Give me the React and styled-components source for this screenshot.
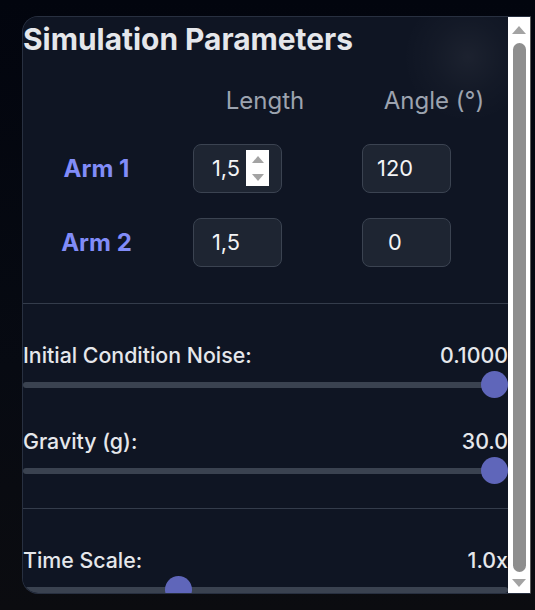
import React from "react";
import styled, { createGlobalStyle } from "styled-components";

const Global = createGlobalStyle`
  html, body {
    margin: 0;
    padding: 0;
  }
  body {
    background: linear-gradient(180deg, #02050e 0%, #070a12 60%, #0b0c10 100%);
    font-family: Inter, "Noto Sans", sans-serif;
  }
`;

const arms = [
  { name: "Arm 1", length: "1,5", angle: "120", spin: true },
  { name: "Arm 2", length: "1,5", angle: "0", spin: false },
];

const App = () => {
  return (
    <>
      <Global />
      <Page>
        <Panel>
          <Content>
            <Title>Simulation Parameters</Title>
            <ArmGrid>
              <span />
              <ColHead>Length</ColHead>
              <ColHead>Angle (°)</ColHead>
              {arms.map((arm) => (
                <React.Fragment key={arm.name}>
                  <ArmLabel>{arm.name}</ArmLabel>
                  <NumBox $offset={23}>
                    <span>{arm.length}</span>
                    <Spinner $show={arm.spin}>
                      <SpinUp />
                      <SpinDown />
                    </Spinner>
                  </NumBox>
                  <NumBox $offset={2}>
                    <span>{arm.angle}</span>
                    <Spinner />
                  </NumBox>
                </React.Fragment>
              ))}
            </ArmGrid>
            <Divider />
            <Section $top={35}>
              <Slider label="Initial Condition Noise:" value="0.1000" frac={1} />
              <Gap />
              <Slider label="Gravity (g):" value="30.0" frac={1} />
            </Section>
            <Divider />
            <Section $top={35}>
              <Slider label="Time Scale:" value="1.0x" frac={0.31} />
            </Section>
          </Content>
          <Scrollbar>
            <ArrowSlot $h={26}>
              <ArrowUp />
            </ArrowSlot>
            <ScrollThumb />
            <ArrowSlot $h={21}>
              <ArrowDown />
            </ArrowSlot>
          </Scrollbar>
        </Panel>
      </Page>
    </>
  );
};

const Slider = ({ label, value, frac }) => (
  <div>
    <SliderHead>
      <span>{label}</span>
      <span>{value}</span>
    </SliderHead>
    <Track>
      <Knob style={{ left: `calc((100% - 27px) * ${frac})` }} />
    </Track>
  </div>
);

const Page = styled.div`
  height: 610px;
  padding: 16px 0 0 22px;
  box-sizing: border-box;
`;

const Panel = styled.div`
  display: flex;
  width: 509px;
  height: 578px;
  box-sizing: border-box;
  border: 1px solid #283040;
  border-right-color: #5a5a5a;
  border-radius: 16px 0 0 16px;
  overflow: hidden;
  background: #0f1523;
`;

const Content = styled.div`
  flex: 1;
  overflow: hidden;
  background: radial-gradient(
      circle at 445px 40px,
      rgba(255, 255, 255, 0.055) 0,
      rgba(255, 255, 255, 0.02) 35px,
      rgba(255, 255, 255, 0) 65px
    ),
    #0f1523;
`;

const Title = styled.h2`
  margin: 5px 0 0;
  font-size: 29.9px;
  line-height: 34px;
  font-weight: 700;
  color: #e5e7eb;
`;

const ArmGrid = styled.div`
  display: grid;
  grid-template-columns: 147px 190px 1fr;
  grid-template-rows: 55px 74px 74px;
  align-items: center;
  margin-top: 20px;
`;

const ColHead = styled.div`
  margin-bottom: 6px;
  text-align: center;
  font-size: 24px;
  line-height: 36px;
  font-weight: 400;
  color: #9ca3af;
`;

const ArmLabel = styled.div`
  text-align: center;
  font-size: 24px;
  font-weight: 700;
  color: #818cf8;
`;

const NumBox = styled.div`
  display: flex;
  align-items: center;
  width: 89px;
  height: 49px;
  box-sizing: border-box;
  margin-left: ${(p) => p.$offset}px;
  padding: 0 12px;
  border: 1px solid #3b4351;
  border-radius: 8px;
  background: #1e2532;
  color: #f3f4f6;
  font-size: 21.8px;
  span {
    flex: 1;
    text-align: center;
  }
`;

const Spinner = styled.div`
  width: 23px;
  height: 36px;
  display: flex;
  flex-direction: column;
  align-items: center;
  justify-content: space-around;
  background: ${(p) => (p.$show ? "#ffffff" : "transparent")};
  visibility: ${(p) => (p.$show ? "visible" : "hidden")};
`;

const SpinUp = styled.div`
  width: 0;
  height: 0;
  border-left: 6.5px solid transparent;
  border-right: 6.5px solid transparent;
  border-bottom: 7px solid #a3a3a3;
`;

const SpinDown = styled(SpinUp)`
  border-bottom: none;
  border-top: 7px solid #a3a3a3;
`;

const Divider = styled.div`
  height: 1px;
  background: #343c4b;
  margin-top: 24px;
`;

const Section = styled.div`
  padding-top: ${(p) => p.$top}px;
`;

const Gap = styled.div`
  height: 27px;
`;

const SliderHead = styled.div`
  display: flex;
  justify-content: space-between;
  font-size: 21.33px;
  line-height: 32px;
  font-weight: 500;
  color: #e5e7eb;
`;

const Track = styled.div`
  position: relative;
  height: 27px;
  &::before {
    content: "";
    position: absolute;
    left: 0;
    right: 0;
    top: 10.5px;
    height: 6px;
    border-radius: 3px;
    background: #3a4250;
  }
`;

const Knob = styled.div`
  position: absolute;
  top: 0;
  width: 27px;
  height: 27px;
  border-radius: 50%;
  background: #5f66ba;
`;

const Scrollbar = styled.div`
  width: 22px;
  display: flex;
  flex-direction: column;
  align-items: center;
  background: #ffffff;
`;

const ArrowSlot = styled.div`
  height: ${(p) => p.$h}px;
  width: 100%;
  display: flex;
  align-items: center;
  justify-content: center;
`;

const ArrowUp = styled.div`
  width: 0;
  height: 0;
  border-left: 7.5px solid transparent;
  border-right: 7.5px solid transparent;
  border-bottom: 8px solid #a3a3a3;
`;

const ArrowDown = styled(ArrowUp)`
  border-bottom: none;
  border-top: 8px solid #a3a3a3;
`;

const ScrollThumb = styled.div`
  flex: 1;
  width: 13px;
  margin-left: 1px;
  border-radius: 7px;
  background: #8e8e8e;
`;

export default App;
